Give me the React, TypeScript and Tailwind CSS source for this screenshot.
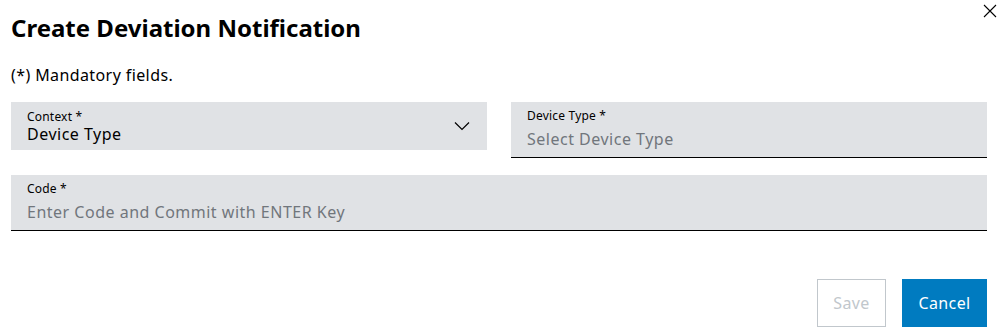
import React from 'react';

const Field: React.FC<{ label: string; value: string; placeholder?: boolean; underline?: boolean; chevron?: boolean }> = ({
    label,
    value,
    placeholder,
    underline,
    chevron,
}) => (
    <div
        className={`relative flex flex-col bg-[#e0e2e5] pl-4 pr-12 ${underline ? 'h-[56px] border-b border-black pt-[6px]' : 'h-[48px] pt-[7px]'}`}
    >
        <span className="text-[12px] leading-[16px] tracking-[0.2px] text-[#000]">{label}</span>
        <span
            className={`text-[16px] leading-[22px] tracking-[0.5px] ${placeholder ? 'text-[#71767c] mt-[4px]' : 'text-[#000] -mt-[2px]'}`}
        >
            {value}
        </span>
        {chevron && (
            <svg className="absolute right-[17px] top-[19px] w-[16px] h-[10px]" viewBox="0 0 16 10" fill="none">
                <path d="M1 1.5 8 8.5l7-7" stroke="#000" strokeWidth="1.2" />
            </svg>
        )}
    </div>
);

export default function App() {
    return (
        <div className="relative w-[1000px] h-[330px] bg-white font-['Noto_Sans',sans-serif] text-black">
            <button type="button" className="absolute right-[3px] top-[4px] w-[14px] h-[14px]">
                <svg viewBox="0 0 14 14" className="w-full h-full" fill="none">
                    <path d="M1 1l12 12M13 1 1 13" stroke="#000" strokeWidth="1.1" />
                </svg>
            </button>
            <div className="pl-[11px] pr-[13px] pt-[12px]">
                <h1 className="text-[24px] leading-[32px] font-bold">Create Deviation Notification</h1>
                <p className="mt-[21px] text-[16px] leading-[20px] tracking-[0.4px]">(*) Mandatory fields.</p>
                <div className="mt-[17px] grid grid-cols-2 gap-x-[24px] items-start">
                    <Field label="Context *" value="Device Type" chevron />
                    <Field label="Device Type *" value="Select Device Type" placeholder underline />
                </div>
                <div className="mt-[17px]">
                    <Field label="Code *" value="Enter Code and Commit with ENTER Key" placeholder underline />
                </div>
                <div className="mt-[48px] flex justify-end gap-[16px]">
                    <button
                        type="button"
                        disabled
                        className="w-[69px] h-[48px] border border-[#c1c7cc] text-[16px] tracking-[0.4px] text-[#c1c7cc]"
                    >
                        Save
                    </button>
                    <button
                        type="button"
                        className="w-[85px] h-[48px] bg-[#007bc0] text-[16px] tracking-[0.4px] text-white"
                    >
                        Cancel
                    </button>
                </div>
            </div>
        </div>
    );
}
